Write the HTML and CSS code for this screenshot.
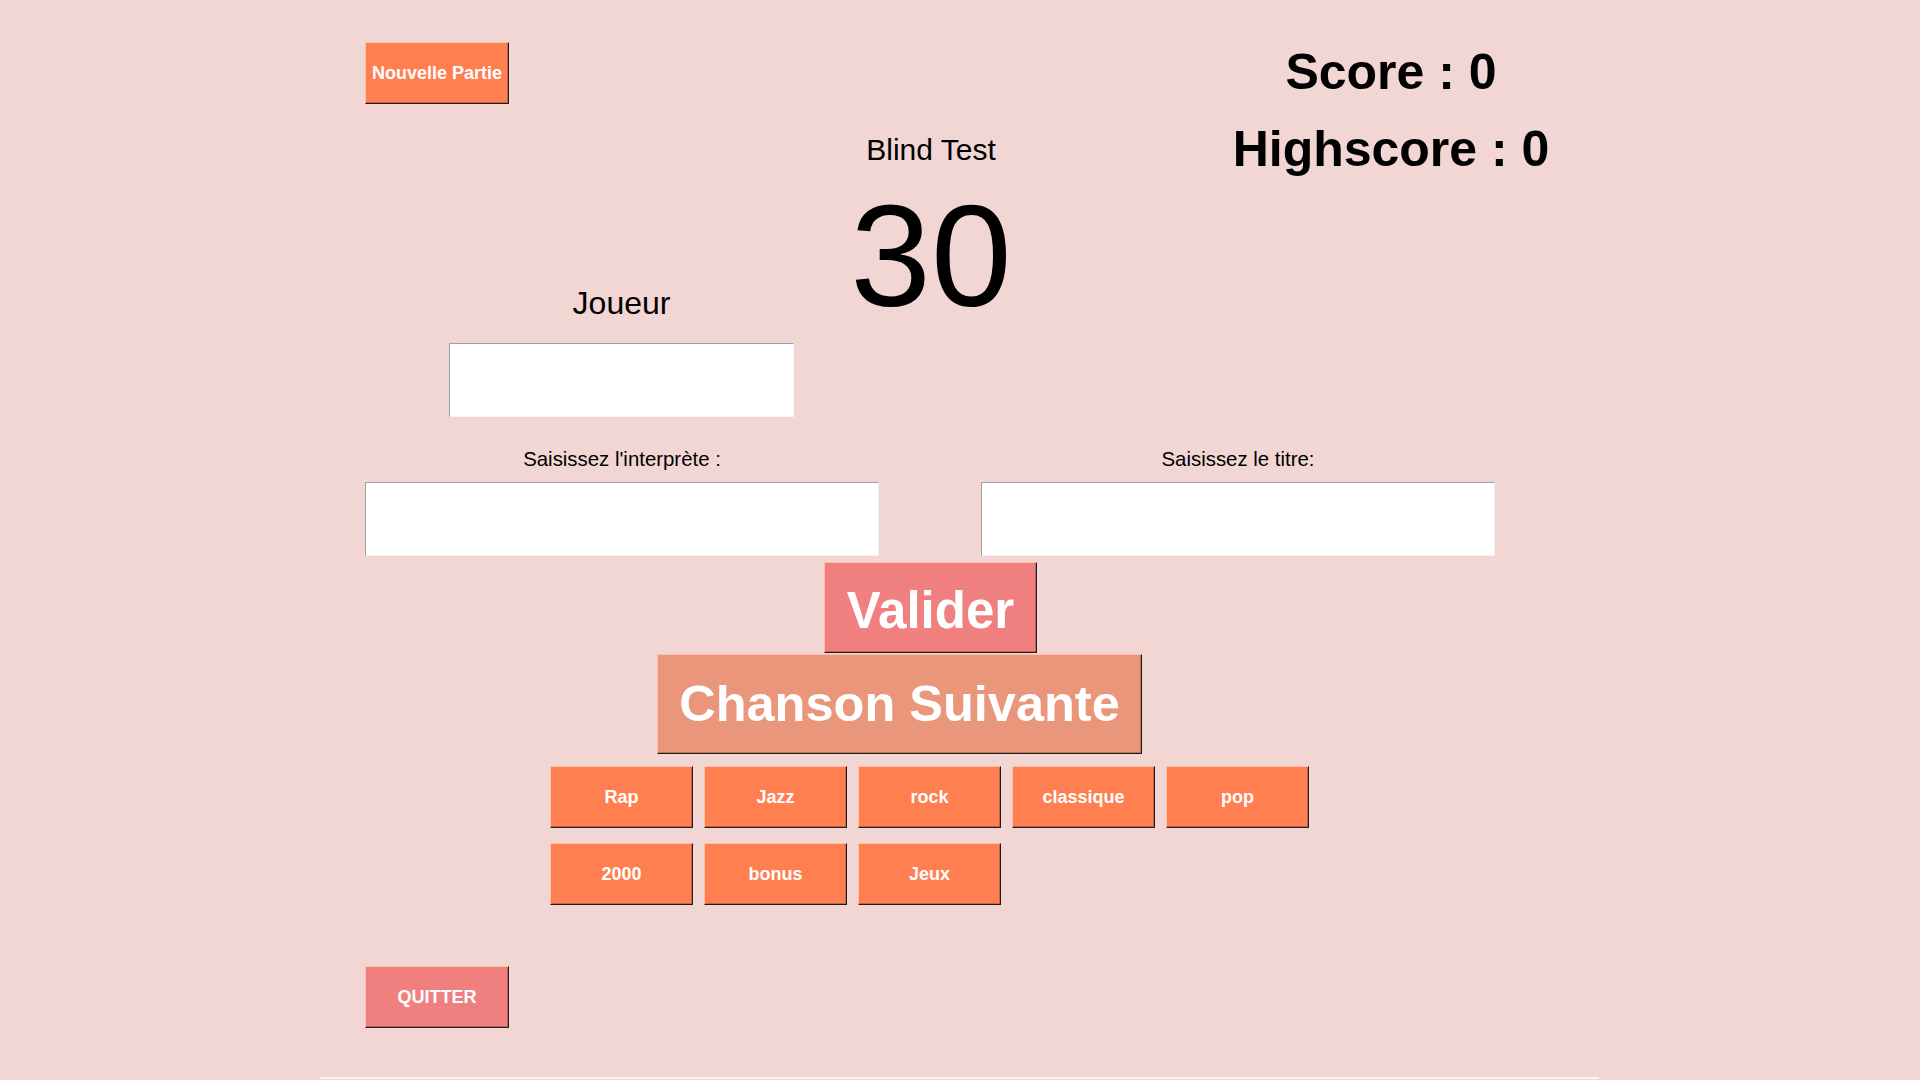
FILE: index.html
```html
<!DOCTYPE html>
<html lang="fr">
<head>
<meta charset="utf-8">
<title>Blind Test</title>
<link rel="stylesheet" href="styles.css">
</head>
<body>
<main class="page">
  <section class="top">
    <div class="col-left">
      <button class="btn btn-coral btn-small">Nouvelle Partie</button>
      <div class="player">
        <label class="player-label" for="joueur">Joueur</label>
        <input id="joueur" class="field player-input" type="text">
      </div>
    </div>
    <div class="col-center">
      <div class="title">Blind Test</div>
      <div class="timer">30</div>
    </div>
    <div class="col-right">
      <div class="score">Score : 0</div>
      <div class="score">Highscore : 0</div>
    </div>
  </section>
  <section class="fields">
    <div class="field-group">
      <label class="field-label" for="artist">Saisissez l'interprète :</label>
      <input id="artist" class="field answer-input" type="text">
    </div>
    <div class="field-group">
      <label class="field-label" for="title">Saisissez le titre:</label>
      <input id="title" class="field answer-input" type="text">
    </div>
  </section>
  <div class="valider-row">
    <button class="btn btn-valider">Valider</button>
  </div>
  <button class="btn btn-next">Chanson Suivante</button>
  <div class="categories">
    <button class="btn btn-coral btn-cat">Rap</button>
    <button class="btn btn-coral btn-cat">Jazz</button>
    <button class="btn btn-coral btn-cat">rock</button>
    <button class="btn btn-coral btn-cat">classique</button>
    <button class="btn btn-coral btn-cat">pop</button>
    <button class="btn btn-coral btn-cat">2000</button>
    <button class="btn btn-coral btn-cat">bonus</button>
    <button class="btn btn-coral btn-cat">Jeux</button>
  </div>
  <button class="btn btn-small btn-quit">QUITTER</button>
</main>
<div class="bottom-line"></div>
</body>
</html>
```

FILE: styles.css
```css
* { box-sizing: border-box; }
html, body { margin: 0; padding: 0; }
body {
  width: 1920px;
  height: 1080px;
  overflow: hidden;
  background: #f2d6d4;
  font-family: "Liberation Sans", Arial, sans-serif;
  color: #000;
}
.page {
  padding-left: 365px;
  display: flex;
  flex-direction: column;
  align-items: flex-start;
}
.top {
  display: grid;
  grid-template-columns: 464px 204px 716px;
}
.col-left {
  display: flex;
  flex-direction: column;
  align-items: flex-start;
  padding-top: 42px;
}
.btn {
  font-family: "Liberation Sans", Arial, sans-serif;
  font-weight: bold;
  color: #fff;
  border: 1px solid;
  border-color: #ffc0a6 #1c1c1c #1c1c1c #ffc0a6;
  box-shadow: inset -1px -1px 0 rgba(0, 0, 0, 0.22);
  padding: 0;
  margin: 0;
  display: flex;
  align-items: center;
  justify-content: center;
  line-height: 1;
  cursor: pointer;
}
.btn-coral { background: #ff7f50; }
.btn-small { width: 144px; height: 62px; font-size: 18px; }
.player {
  margin-left: 84px;
  width: 345px;
  display: flex;
  flex-direction: column;
}
.player-label {
  margin-top: 179px;
  height: 40px;
  line-height: 40px;
  font-size: 32px;
  text-align: center;
}
.field {
  display: block;
  height: 74px;
  margin: 0;
  padding: 0;
  border: 1px solid;
  border-color: #a0a0a0 #f4f4f4 #f4f4f4 #a0a0a0;
  background: #fff;
  outline: none;
}
.player-input { margin-top: 20px; width: 345px; }
.col-center {
  display: flex;
  flex-direction: column;
  text-align: center;
}
.title {
  margin-top: 134px;
  font-size: 30px;
  line-height: 32px;
}
.timer {
  margin-top: 18px;
  font-size: 145px;
  line-height: 145px;
}
.col-right {
  padding-top: 34px;
  text-align: center;
}
.score {
  font-size: 50px;
  font-weight: bold;
  line-height: 77px;
}
.fields {
  display: grid;
  grid-template-columns: 514px 514px;
  column-gap: 102px;
  margin-top: 30px;
}
.field-group {
  display: flex;
  flex-direction: column;
}
.field-label {
  height: 24px;
  font-size: 20.4px;
  line-height: 24px;
  text-align: center;
}
.answer-input { margin-top: 11px; width: 514px; }
.valider-row {
  width: 1131px;
  display: flex;
  justify-content: center;
  margin-top: 6px;
}
.btn-valider {
  width: 213px;
  height: 91px;
  background: #f08080;
  font-size: 51px;
  padding-top: 6px;
}
.btn-next {
  margin-left: 292px;
  margin-top: 1px;
  width: 485px;
  height: 100px;
  background: #e9967a;
  font-size: 50.5px;
}
.categories {
  margin-left: 185px;
  margin-top: 12px;
  display: grid;
  grid-template-columns: repeat(5, 143px);
  column-gap: 11px;
  row-gap: 15px;
}
.btn-cat { width: 143px; height: 62px; font-size: 18px; }
.btn-quit { margin-top: 61px; background: #f08080; }
.bottom-line {
  margin-left: 320px;
  margin-top: 49px;
  width: 1279px;
  height: 2px;
  background: #faf3f3;
}
```
